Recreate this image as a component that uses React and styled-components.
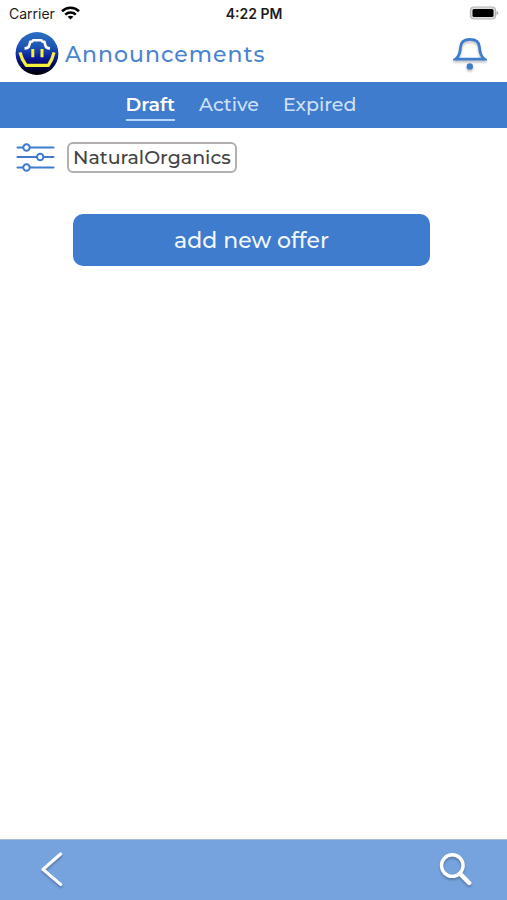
import { useState } from "react";
import styled, { createGlobalStyle } from "styled-components";

const GlobalStyle = createGlobalStyle`
  * {
    box-sizing: border-box;
  }

  body {
    margin: 0;
    background-color: #ffffff;
    font-family: Montserrat, Inter, sans-serif;
    font-weight: 500;
  }

  button {
    font-family: inherit;
    font-weight: inherit;
    border: none;
    padding: 0;
    background: none;
    cursor: pointer;
  }

  svg {
    display: block;
  }
`;

const Screen = styled.div`
  display: flex;
  flex-direction: column;
  min-height: 100vh;
`;

const StatusBar = styled.div`
  display: grid;
  grid-template-columns: 1fr auto 1fr;
  align-items: center;
  height: 28px;
  padding: 0 8px 2px 9px;
  font-family: Inter, sans-serif;
  font-size: 14px;
  font-weight: 400;
  color: #1c1c1c;
`;

const Carrier = styled.span`
  display: flex;
  align-items: center;
  gap: 6px;
`;

const Clock = styled.span`
  font-weight: 600;
`;

const Battery = styled.span`
  justify-self: end;
`;

const Header = styled.header`
  display: flex;
  align-items: center;
  gap: 6px;
  height: 54px;
  padding: 0 20px 2px 15px;
`;

const Title = styled.h1`
  flex: 1;
  margin: 0;
  font-size: 22px;
  font-weight: 500;
  letter-spacing: 1px;
  color: #4a84d0;
`;

const IconButton = styled.button`
  filter: ${(props) =>
    props.$shadow ? "drop-shadow(0 2px 1px rgba(0, 0, 0, 0.25))" : "none"};
`;

const Tabs = styled.nav`
  display: flex;
  justify-content: center;
  align-items: center;
  gap: 24px;
  height: 46px;
  padding-right: 25px;
  background-color: #3f7ccd;
`;

const Tab = styled.button`
  height: 31px;
  line-height: 30px;
  font-size: 19px;
  font-weight: ${(props) => (props.$active ? 600 : 500)};
  color: ${(props) => (props.$active ? "#ffffff" : "#cfe0f6")};
  border-bottom: 2px solid
    ${(props) => (props.$active ? "#b9d4f6" : "transparent")};
`;

const Content = styled.main`
  display: flex;
  flex-direction: column;
  flex: 1;
  gap: 41px;
  padding: 14px 16px;
`;

const FilterRow = styled.div`
  display: flex;
  align-items: center;
  gap: 12px;
`;

const Chip = styled.button`
  height: 31px;
  padding: 0 4px;
  border: 2px solid #b3afaf;
  border-radius: 6px;
  font-size: 19px;
  color: #444444;
`;

const AddButton = styled.button`
  align-self: center;
  width: 75%;
  height: 52px;
  margin-right: 4px;
  border-radius: 10px;
  background-color: #3f7ccd;
  font-size: 22px;
  color: #f2f7fd;
`;

const Footer = styled.footer`
  display: flex;
  justify-content: space-between;
  align-items: center;
  height: 61px;
  padding: 0 34px 0 38px;
  border-top: 1px solid #a9bcd6;
  background-color: #76a3de;
`;

const WifiIcon = () => (
  <svg width="19" height="14" viewBox="0 0 19 14" fill="none" stroke="#000" strokeWidth="2.6">
    <path d="M1 5.2C5.8 .6 13.2 .6 18 5.2" />
    <path d="M4.2 8.6C7.2 5.8 11.8 5.8 14.8 8.6" />
    <path d="M9.5 13.6L6.6 10.7C8.2 9.3 10.8 9.3 12.4 10.7Z" fill="#000" stroke="none" />
  </svg>
);

const BatteryIcon = () => (
  <svg width="30" height="14" viewBox="0 0 30 14">
    <rect x="1.5" y="1" width="25" height="12" rx="3.5" fill="#ddd" stroke="#b5b5b5" strokeWidth="1.2" />
    <rect x="3.5" y="3" width="21" height="8" rx="1.5" fill="#000" />
    <path d="M27.5 4.8C29.8 5.6 29.8 8.4 27.5 9.2Z" fill="#aaa" />
  </svg>
);

const Logo = () => (
  <svg width="44" height="44" viewBox="0 0 44 44" fill="none" strokeLinejoin="round">
    <defs>
      <linearGradient id="logoFill" x1="0" y1="0" x2="0" y2="1">
        <stop offset="0" stopColor="#2f6fc4" />
        <stop offset="0.35" stopColor="#1d55b4" />
        <stop offset="0.6" stopColor="#0a1a9c" />
        <stop offset="0.8" stopColor="#02054a" />
        <stop offset="1" stopColor="#000000" />
      </linearGradient>
    </defs>
    <circle cx="22" cy="21.5" r="21.4" fill="url(#logoFill)" />
    <path
      d="M9.5 16.4C12.4 16.4 13.8 15.8 14.2 13.6L15.2 9.8L17.2 9.6L18.2 8.2H26.4L27.4 9.6L29.4 9.8L30.4 13.6C30.8 15.8 32.2 16.4 35 16.4"
      stroke="#fff"
      strokeWidth="2.6"
    />
    <path d="M17.8 17V25.2M27 17V25.2" stroke="#f5f03a" strokeWidth="3" />
    <path d="M5 20.4C6 25 8.4 29.6 11.2 33.4H33.4C36 29.6 38 25 39 20.4" stroke="#f5f03a" strokeWidth="3.2" />
  </svg>
);

const BellIcon = () => (
  <svg width="34" height="36" viewBox="0 0 34 36" fill="none">
    <path
      d="M2.5 23.2C6.5 20.5 7.2 16 7.6 11C8 5.6 11.4 3.4 17 3.4C22.6 3.4 26 5.6 26.4 11C26.8 16 27.5 20.5 31.5 23.2Z"
      stroke="#3f7ccd"
      strokeWidth="2.8"
      strokeLinejoin="miter"
    />
    <circle cx="16.8" cy="30.4" r="3.2" fill="#3f7ccd" />
  </svg>
);

const FilterIcon = () => (
  <svg width="39" height="30" viewBox="0 0 39 30" fill="#fff" stroke="#3f7ccd" strokeWidth="2">
    <path d="M1.5 4.5H37.5M1.5 14H37.5M1.5 24.5H37.5" strokeLinecap="round" />
    <circle cx="10.5" cy="4.5" r="3.2" />
    <circle cx="24.2" cy="14" r="3.2" />
    <circle cx="10.5" cy="24.5" r="3.2" />
  </svg>
);

const BackIcon = () => (
  <svg width="28" height="38" viewBox="0 0 28 38" fill="none">
    <path
      d="M22.6 3L5 18.4L22.6 33.4"
      stroke="#fff"
      strokeWidth="3.2"
      strokeLinecap="round"
      strokeLinejoin="round"
    />
  </svg>
);

const SearchIcon = () => (
  <svg width="34" height="36" viewBox="0 0 34 36" fill="none" stroke="#fff">
    <circle cx="13.3" cy="13.6" r="10.8" strokeWidth="3.4" />
    <path d="M21 21.6L30.2 31" strokeWidth="4.4" strokeLinecap="round" />
  </svg>
);

const tabs = ["Draft", "Active", "Expired"];

function App() {
  const [activeTab, setActiveTab] = useState("Draft");

  return (
    <>
      <GlobalStyle />
      <Screen>
        <StatusBar>
          <Carrier>
            Carrier
            <WifiIcon />
          </Carrier>
          <Clock>4:22 PM</Clock>
          <Battery>
            <BatteryIcon />
          </Battery>
        </StatusBar>

        <Header>
          <Logo />
          <Title>Announcements</Title>
          <IconButton $shadow aria-label="Notifications">
            <BellIcon />
          </IconButton>
        </Header>

        <Tabs>
          {tabs.map((tab) => (
            <Tab
              key={tab}
              $active={tab === activeTab}
              onClick={() => setActiveTab(tab)}
            >
              {tab}
            </Tab>
          ))}
        </Tabs>

        <Content>
          <FilterRow>
            <IconButton aria-label="Filters">
              <FilterIcon />
            </IconButton>
            <Chip>NaturalOrganics</Chip>
          </FilterRow>
          <AddButton>add new offer</AddButton>
        </Content>

        <Footer>
          <IconButton $shadow aria-label="Back">
            <BackIcon />
          </IconButton>
          <IconButton $shadow aria-label="Search">
            <SearchIcon />
          </IconButton>
        </Footer>
      </Screen>
    </>
  );
}

export default App;
